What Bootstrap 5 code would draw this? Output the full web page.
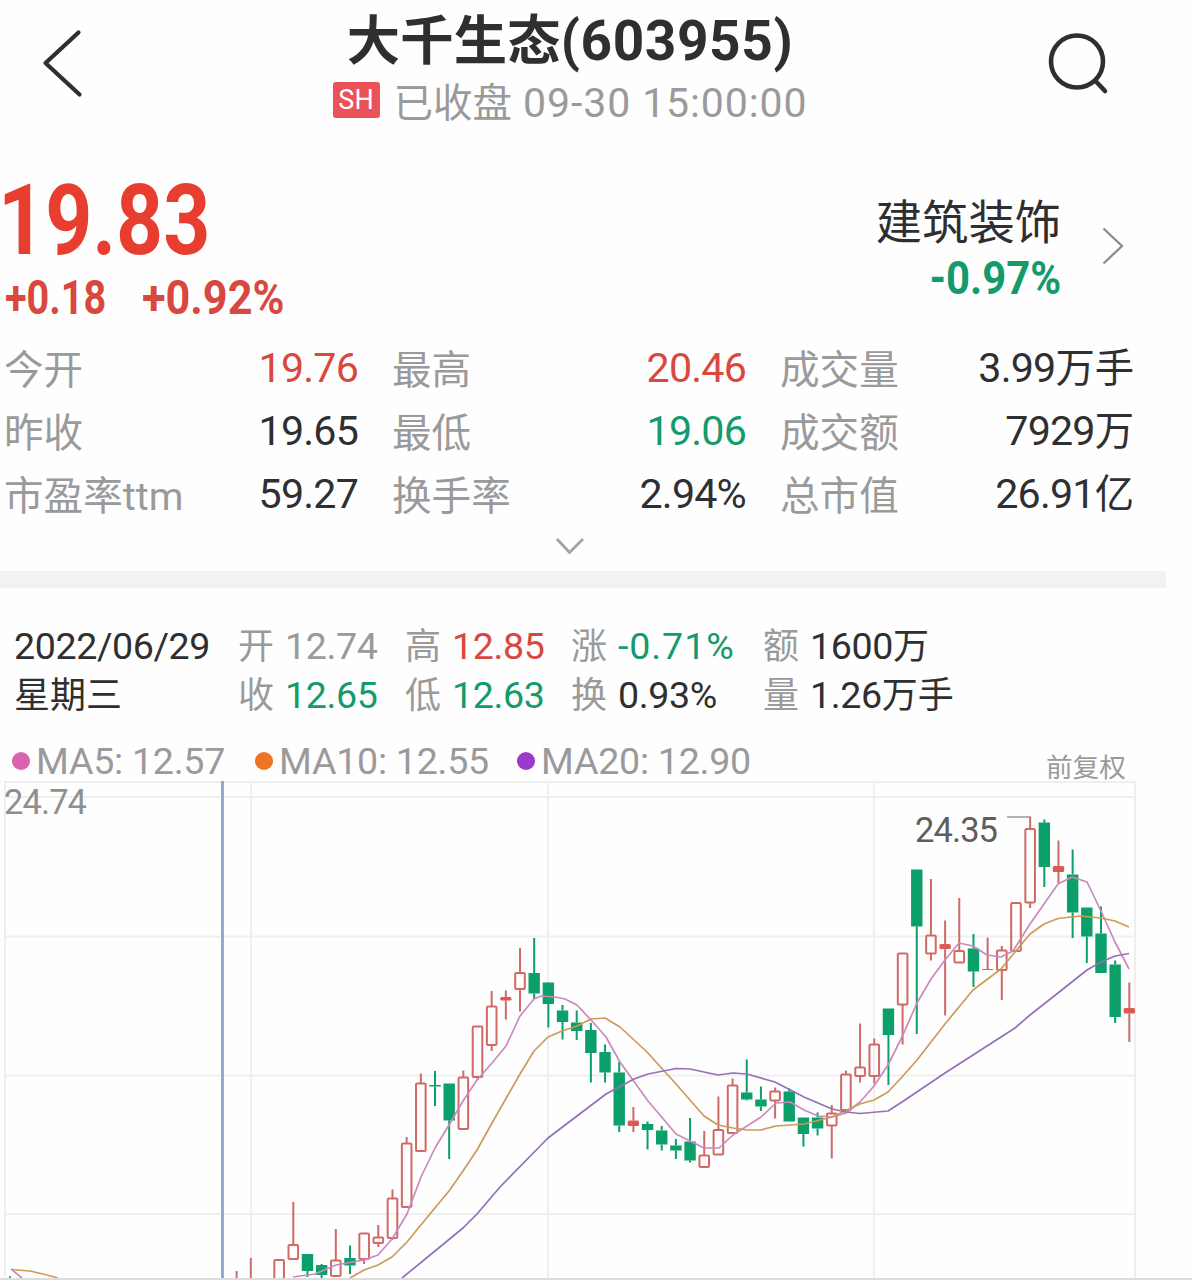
<!DOCTYPE html>
<html lang="zh-CN">
<head>
<meta charset="utf-8">
<meta name="viewport" content="width=device-width, initial-scale=1">
<title>大千生态(603955)</title>
<link href="https://cdn.jsdelivr.net/npm/bootstrap@5.3.0/dist/css/bootstrap.min.css" rel="stylesheet">
<style>
:root{--ink:#2f2f31;--mute:#9a9a9a;--up:#d9483f;--down:#149a6b}
body{font-family:Roboto,"Noto Sans CJK SC",sans-serif;color:var(--ink);background:#fefefe;overflow:hidden}
.app{width:1192px;height:1280px;overflow:hidden}
.c-up{color:var(--up)}.c-down{color:var(--down)}.c-mute{color:var(--mute)}
.topbar{height:170px;padding:0 76px 0 36px}
.heads{width:480px;margin-left:12px}
.ttl{font-size:55px;line-height:82px;font-weight:700;white-space:nowrap;margin:0;letter-spacing:.6px}
.ttl span{font-size:53.3px;line-height:1;letter-spacing:.2px}
.status{font-size:41px;line-height:43px;color:var(--mute);white-space:nowrap;letter-spacing:.9px}
.status .zh{font-size:39.5px;line-height:1;letter-spacing:0}
.exch{width:47px;height:36px;border-radius:3px;background:#eb5257;color:#fff;font-size:27px;line-height:37px;letter-spacing:0;margin:0 14px 7px 0}
.quote{height:167px}
.price{width:250px;font-size:99px;line-height:100px;font-weight:700;color:#e83e30;transform-origin:0 50%;transform:translateX(-2px) scaleX(.83);white-space:nowrap}
.delta{padding-left:5px;font-size:48px;line-height:55px;font-weight:700;color:var(--up);white-space:nowrap}
.delta span{display:inline-block;transform-origin:0 50%;transform:scaleX(.9)}
.delta .d1{width:137px;transform:scaleX(.825)}
.sector{padding-top:25px}
.sector .nm{font-size:46.3px;line-height:56px}
.sector .pc{margin-top:-2px;font-size:46px;line-height:58px;font-weight:700;transform-origin:100% 50%;transform:scaleX(.91)}
.stats{padding:0 57px 0 4px;column-gap:34px}
.stats>div{width:354px}
.stat{height:63px;line-height:63px;font-size:41.2px;letter-spacing:-.8px;white-space:nowrap}
.stat .lb{font-size:39.6px;line-height:68px;color:var(--mute);letter-spacing:0}
.stat .zh{font-size:39.3px;line-height:1;letter-spacing:0}
.more{height:45px;padding:10px 0 0 554px}
.band{height:17px;width:1166px;background:#f1f2f4}
.info{padding:34px 0 0 14px;height:154px;font-size:37.6px;line-height:48.5px;letter-spacing:-.4px;white-space:nowrap}
.info .zh{font-size:36px;line-height:1;letter-spacing:0}
.info .k{height:48.5px;font-size:36px;line-height:51px;color:var(--mute);width:47px;letter-spacing:0}
.info .wide{letter-spacing:.9px}
.w1{width:224px}.w2{width:167px}.w3{width:166px}.w4{width:192px}
.legend{height:38px;padding-left:12px;font-size:37.6px;line-height:40px;letter-spacing:-.25px;color:var(--mute);white-space:nowrap}
.legend i{width:18px;height:18px;border-radius:50%;margin-right:6px}
.l1{width:243px}.l2{width:262px}.l3{width:529px}
.adj{font-size:26.6px;line-height:52px;letter-spacing:0}
.chart{display:block}
</style>
<script src="https://cdn.jsdelivr.net/npm/bootstrap@5.3.0/dist/js/bootstrap.bundle.min.js"></script>
</head>
<body>
<main class="app d-flex flex-column">
  <header class="topbar d-flex justify-content-between flex-shrink-0">
    <svg width="52" height="130" viewBox="36 0 52 130" fill="none" stroke="#2f2f31" stroke-width="4.2" stroke-linecap="round" stroke-linejoin="round"><path d="M78.500 32.500 45.500 63 79.500 94.500"/></svg>
    <div class="heads text-center">
      <h1 class="ttl"><span>大千生态</span>(603955)</h1>
      <div class="status d-flex justify-content-center align-items-end">
        <span class="exch">SH</span><div><span class="zh">已收盘</span> 09-30 15:00:00</div>
      </div>
    </div>
    <svg width="76" height="130" viewBox="1040 0 76 130" fill="none" stroke="#2f2f31" stroke-width="4.6" stroke-linecap="round"><circle cx="1077" cy="61.500" r="26"/><path d="M1095.500 81 1105 91"/></svg>
  </header>

  <section class="quote d-flex justify-content-between flex-shrink-0">
    <div>
      <div class="price">19.83</div>
      <div class="delta d-flex"><span class="d1">+0.18</span><span>+0.92%</span></div>
    </div>
    <div class="d-flex">
      <div class="sector text-end">
        <div class="nm">建筑装饰</div>
        <div class="pc c-down">-0.97%</div>
      </div>
      <svg width="131" height="160" viewBox="1061 170 131 160" fill="none" stroke="#8b8b8b" stroke-width="2.300"><path d="M1103.500 228.500 1122 246 1103.500 263.500"/></svg>
    </div>
  </section>

  <section class="stats d-flex flex-shrink-0">
    <div>
      <div class="stat d-flex justify-content-between"><span class="lb">今开</span><span class="c-up">19.76</span></div>
      <div class="stat d-flex justify-content-between"><span class="lb">昨收</span><span>19.65</span></div>
      <div class="stat d-flex justify-content-between"><span class="lb">市盈率ttm</span><span>59.27</span></div>
    </div>
    <div>
      <div class="stat d-flex justify-content-between"><span class="lb">最高</span><span class="c-up">20.46</span></div>
      <div class="stat d-flex justify-content-between"><span class="lb">最低</span><span class="c-down">19.06</span></div>
      <div class="stat d-flex justify-content-between"><span class="lb">换手率</span><span>2.94%</span></div>
    </div>
    <div>
      <div class="stat d-flex justify-content-between"><span class="lb">成交量</span><span>3.99<span class="zh">万手</span></span></div>
      <div class="stat d-flex justify-content-between"><span class="lb">成交额</span><span>7929<span class="zh">万</span></span></div>
      <div class="stat d-flex justify-content-between"><span class="lb">总市值</span><span>26.91<span class="zh">亿</span></span></div>
    </div>
  </section>
  <div class="more flex-shrink-0"><svg class="d-block" width="32" height="20" viewBox="554 535 32 20" fill="none" stroke="#a2a2a2" stroke-width="2.800"><path d="M557 538 569.500 551.500 583 538"/></svg></div>
  <div class="band flex-shrink-0"></div>

  <section class="info d-flex flex-shrink-0">
    <div class="w1"><div>2022/06/29</div><div><span class="zh">星期三</span></div></div>
    <div class="w2"><div class="d-flex"><span class="k">开</span><span class="c-mute">12.74</span></div><div class="d-flex"><span class="k">收</span><span class="c-down">12.65</span></div></div>
    <div class="w3"><div class="d-flex"><span class="k">高</span><span class="c-up">12.85</span></div><div class="d-flex"><span class="k">低</span><span class="c-down">12.63</span></div></div>
    <div class="w4"><div class="d-flex"><span class="k">涨</span><span class="c-down wide">-0.71%</span></div><div class="d-flex"><span class="k">换</span><span>0.93%</span></div></div>
    <div><div class="d-flex"><span class="k">额</span><span>1600<span class="zh">万</span></span></div><div class="d-flex"><span class="k">量</span><span>1.26<span class="zh">万手</span></span></div></div>
  </section>
  <div class="legend d-flex flex-shrink-0">
    <div class="l1 d-flex align-items-center"><i style="background:#db62ad"></i>MA5: 12.57</div>
    <div class="l2 d-flex align-items-center"><i style="background:#ed7423"></i>MA10: 12.55</div>
    <div class="l3 d-flex align-items-center"><i style="background:#9a3acb"></i>MA20: 12.90</div>
    <div class="adj">前复权</div>
  </div>
  <svg class="chart flex-shrink-0" width="1192" height="500" viewBox="0 780 1192 500" fill="none">
    <g stroke="#efeff0" stroke-width="2"><path d="M5 1278V782H1135V1278M5 797H1135M5 936.500H1135M5 1075.500H1135M5 1214H1135M251 782V1278M548 782V1278M874 782V1278"/></g>
    <g id="candles"></g>
    <g stroke-width="1.700" stroke-linejoin="round">
      <polyline stroke="#c98abf" points="293,1277 315,1274 336,1265 364,1260 378,1255 392,1239 407,1214 421,1177 435,1148 449,1125 463,1101 477,1080 492,1063 506,1046 520,1016 534,999 541,996 555,997 565,999 577,1005 591,1020 606,1037 620,1062 648,1101 676,1134 704,1148 719,1148 733,1135 761,1117 776,1103 790,1102 804,1110 818,1116 832,1117 846,1113 860,1102 874,1086 888,1065 902,1037 917,1003 931,979 945,960 959,943 973,946 987,955 1001,957 1013,951 1030,924 1058,884 1072,877 1087,882 1101,911 1115,942 1129,969"/>
      <polyline stroke="#cd9a58" points="350,1278 364,1270 378,1265 392,1257 407,1242 420,1226 449,1191 463,1171 477,1150 492,1123 520,1074 534,1051 548,1037 562,1031 577,1026 591,1019 605,1018 620,1027 647,1052 676,1084 704,1116 718,1125 733,1128 747,1130 761,1130 776,1126 804,1124 832,1117 860,1104 874,1100 888,1092 902,1077 917,1060 945,1024 973,990 1001,969 1015,952 1030,934 1044,924 1058,918.500 1080,916 1101,918 1115,921 1129,927"/>
      <polyline stroke="#966fbb" points="402,1278 435,1251 463,1228 477,1214 500,1187 548,1138 577,1116 606,1094 634,1079 648,1074 676,1068.500 690,1069 718,1075 733,1073 747,1074 775,1082 804,1097 832,1109 846,1112 860,1113.500 888,1111 902,1102 945,1073 1015,1028 1030,1015 1058,993 1087,970 1101,962 1115,956 1129,953.500"/>
      <path stroke="#c98abf" d="M11 1269 22 1278"/><path stroke="#cd9a58" d="M11 1269.500 30 1271 45 1274.500 58 1278"/><path stroke="#149a6b" d="M10 1276V1278"/>
    </g>
    <path d="M222.500 781V1278" stroke="#8fa2d0" stroke-width="2.800"/>
    <path d="M1007 817H1030" stroke="#999" stroke-width="1.500"/>
    <path d="M0 1279H1192" stroke="#dcdcde" stroke-width="2"/>
    <g font-size="34.500"><text x="4" y="814" fill="#8f8f8f" textLength="83">24.74</text><text x="915" y="842" fill="#5e5e60" textLength="83">24.35</text></g>
  </svg>
</main>
<script>
// [slot, high, body top, body bottom, low, kind]; r hollow rise, f filled rise, g fall, w wick only
const data=[[-4,1271,1278,1278,1278,'w'],[-3,1258,1278,1278,1278,'w'],[-1,1260,1260,1285,1285,'r'],
[0,1202,1245,1259,1259,'r'],[1,1254,1254,1271,1277,'g'],[2,1264,1265,1275,1278,'g'],[3,1229,1260.5,1276,1276,'r'],[4,1245.5,1258,1265.5,1274,'g'],[5,1233,1233.5,1259,1264,'r'],[6,1225,1237.5,1243,1247,'r'],[7,1189.5,1198.5,1238,1240,'r'],[8,1137,1143.5,1207,1207,'r'],[9,1073.5,1083.5,1151,1151,'r'],[10,1071,1085,1086.5,1106,'g'],[11,1083.5,1083.5,1120.5,1159,'g'],[12,1070.5,1077.5,1129,1129,'r'],[13,1026,1026.5,1077,1080,'r'],[14,991,1006.5,1045,1051,'r'],[15,990.5,997,1000.5,1019.5,'f'],[16,948,973,989,1011.5,'r'],[17,938,973,993.5,999,'g'],[18,982,982.5,1004,1027.5,'g'],[19,1005,1010.5,1022,1039.5,'g'],[20,1010.5,1022.5,1031,1040,'g'],[21,1023,1030,1053,1082.5,'g'],[22,1044.5,1052,1072.5,1082.5,'g'],[23,1062,1072.5,1125.5,1132,'g'],[24,1107,1120.5,1126,1132,'f'],[25,1121.5,1124,1130,1149.5,'g'],[26,1126,1130.5,1144.5,1150.5,'g'],[27,1139,1145.5,1150.5,1159,'g'],[28,1118,1141.5,1160.5,1162.5,'g'],[29,1131,1155.5,1167,1167,'r'],[30,1096.5,1130,1154.5,1154.5,'r'],[31,1078.5,1085.5,1133,1134,'r'],[32,1059.5,1092.5,1099.5,1100.5,'g'],[33,1086.5,1099.5,1106.5,1111,'g'],[34,1087.5,1091.5,1100.5,1118.5,'r'],[35,1088.5,1091.5,1121.5,1121.5,'g'],[36,1117.5,1117.5,1134,1146.5,'g'],[37,1112.5,1117.5,1128.5,1135.5,'g'],[38,1105,1113.5,1125.5,1158.5,'r'],[39,1070.5,1074.5,1110,1110,'r'],[40,1023.5,1067.5,1076,1082.5,'r'],[41,1038.5,1044.5,1076,1083.5,'r'],[42,1008.5,1008.5,1035,1085,'g'],[43,953,953.5,1004.5,1044.5,'r'],[44,869.5,869.5,926.5,1034,'g'],[45,879,935.5,953.5,960.5,'r'],[46,920.5,944,949,1015.5,'f'],[47,898,951,962.5,962.5,'r'],[48,934,948.5,971.5,987,'g'],[49,937.5,969,970,970,'f'],[50,946,950.5,970,1000,'r'],[51,902.5,903,951,951.5,'r'],[52,816.5,829,902.5,908,'r'],[53,819.5,822.5,867,887,'g'],[54,840.5,866,872,883,'f'],[55,849.5,874.5,912.5,938,'g'],[56,907.5,907.5,936.5,963,'g'],[57,906.5,933.5,973,973,'g'],[58,960.5,964.5,1017,1023,'g'],[59,982.5,1008,1013.5,1042,'f']];
document.getElementById('candles').innerHTML=data.map(([i,h,t,b,l,k])=>{
  const x=293.3+14.17*i,g=k==='g',c=g?'#0b9f69':'#d06a65';
  const y2=Math.min(l,1278),bb=Math.min(b,1282);
  let s=`<path d="M${x} ${h}V${t}M${x} ${Math.min(bb,1278)}V${y2}" stroke="${c}" stroke-width="2"/>`;
  if(k==='r')s+=`<rect x="${x-4.8}" y="${t}" width="9.6" height="${bb-t}" rx="1" stroke="${c}" stroke-width="2"/>`;
  else if(k!=='w')s+=`<rect x="${x-5.7}" y="${t}" width="11.4" height="${bb-t}" rx="${k==='f'?1.5:0}" fill="${g?c:'#dc5a55'}"/>`;
  return s;
}).join('');
</script>
</body>
</html>
